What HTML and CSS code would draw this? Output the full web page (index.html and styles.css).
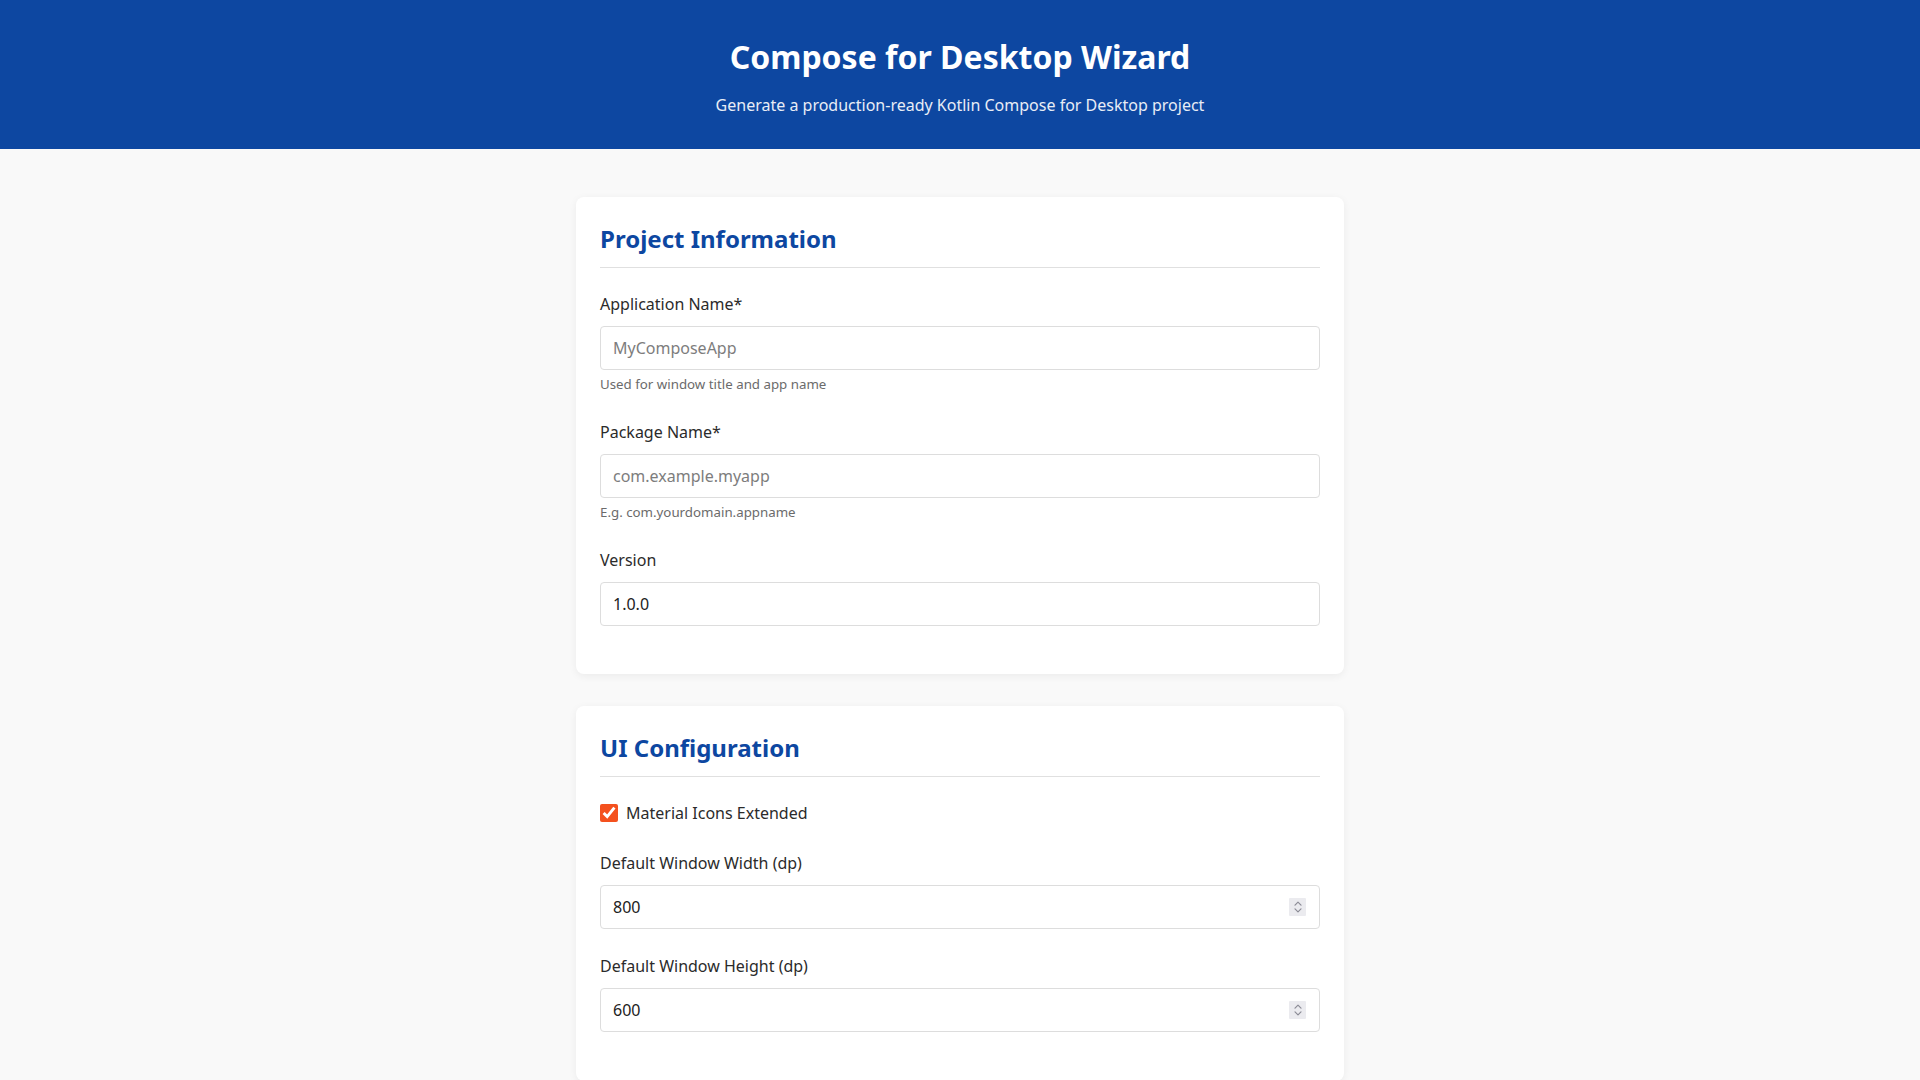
FILE: index.html
```html
<!DOCTYPE html>
<html lang="en">
<head>
<meta charset="utf-8">
<title>Compose for Desktop Wizard</title>
<link rel="stylesheet" href="styles.css">
</head>
<body>
<header class="app-header">
  <h1 class="app-title">Compose for Desktop Wizard</h1>
  <p class="app-subtitle">Generate a production-ready Kotlin Compose for Desktop project</p>
</header>
<main class="wizard">
  <section class="card card-first">
    <h2 class="card-title">Project Information</h2>
    <div class="form-group">
      <label class="field-label" for="appName">Application Name*</label>
      <input class="field-input" id="appName" type="text" placeholder="MyComposeApp">
      <div class="field-hint">Used for window title and app name</div>
    </div>
    <div class="form-group">
      <label class="field-label" for="pkgName">Package Name*</label>
      <input class="field-input" id="pkgName" type="text" placeholder="com.example.myapp">
      <div class="field-hint">E.g. com.yourdomain.appname</div>
    </div>
    <div class="form-group">
      <label class="field-label" for="version">Version</label>
      <input class="field-input" id="version" type="text" value="1.0.0">
    </div>
  </section>
  <section class="card">
    <h2 class="card-title">UI Configuration</h2>
    <div class="check-group">
      <label class="check-label"><input class="check-box" type="checkbox" checked> Material Icons Extended</label>
    </div>
    <div class="form-group">
      <label class="field-label" for="winW">Default Window Width (dp)</label>
      <div class="num-field">
        <input class="num-input" id="winW" type="number" value="800">
        <span class="spinner">
          <svg class="chev" viewBox="0 0 8 5" width="8" height="5"><path d="M1 4.2 L4 1.2 L7 4.2" /></svg>
          <svg class="chev" viewBox="0 0 8 5" width="8" height="5"><path d="M1 0.8 L4 3.8 L7 0.8" /></svg>
        </span>
      </div>
    </div>
    <div class="form-group">
      <label class="field-label" for="winH">Default Window Height (dp)</label>
      <div class="num-field">
        <input class="num-input" id="winH" type="number" value="600">
        <span class="spinner">
          <svg class="chev" viewBox="0 0 8 5" width="8" height="5"><path d="M1 4.2 L4 1.2 L7 4.2" /></svg>
          <svg class="chev" viewBox="0 0 8 5" width="8" height="5"><path d="M1 0.8 L4 3.8 L7 0.8" /></svg>
        </span>
      </div>
    </div>
  </section>
</main>
</body>
</html>
```
FILE: styles.css
```css
* { box-sizing: border-box; }
html, body { margin: 0; padding: 0; }
body {
  font-family: "Noto Sans", "Open Sans", sans-serif;
  background: #f9f9f9;
  color: #333;
  line-height: 1.5;
}
.app-header {
  background: #0d47a1;
  color: #fff;
  text-align: center;
  padding: 38px 0 32px;
}
.app-title {
  margin: 0 0 17px;
  font-size: 32px;
  font-weight: 700;
  line-height: 1.2;
}
.app-subtitle {
  margin: 0;
  font-size: 16px;
  line-height: 1.5;
  color: #e8edf6;
}
.wizard {
  width: 768px;
  margin: 0 auto;
  padding: 48px 0 48px;
  display: flex;
  flex-direction: column;
  gap: 32px;
}
.card {
  background: #fff;
  border-radius: 8px;
  box-shadow: 0 2px 8px rgba(0,0,0,0.06);
  padding: 24px 24px 24px;
}
.card-first {
  padding-bottom: 23px;
}
.card-title {
  margin: 0 0 24px;
  font-size: 24px;
  font-weight: 700;
  line-height: 1.5;
  color: #0d47a1;
  padding-bottom: 10px;
  border-bottom: 1px solid #e0e0e0;
}
.form-group {
  margin-bottom: 25px;
}
.field-label {
  display: block;
  font-size: 16px;
  line-height: 1.5;
  margin-bottom: 10px;
  color: #2b2b2b;
}
.field-input,
.num-field {
  display: block;
  width: 100%;
  font-family: inherit;
  font-size: 16px;
  color: #222;
  padding: 10px 12px;
  border: 1px solid #ddd;
  border-radius: 4px;
  background: #fff;
  line-height: normal;
}
.field-input::placeholder { color: #7d7d7d; }
.num-field {
  display: flex;
  align-items: center;
  padding-right: 13px;
}
.num-input {
  flex: 1;
  min-width: 0;
  border: 0;
  padding: 0;
  margin: 0;
  font: inherit;
  line-height: normal;
  color: inherit;
  background: transparent;
  outline: none;
  -moz-appearance: textfield;
}
.num-input::-webkit-inner-spin-button,
.num-input::-webkit-outer-spin-button {
  -webkit-appearance: none;
  margin: 0;
}
.spinner {
  width: 17px;
  height: 18px;
  background: #ebebef;
  border-radius: 1px;
  display: flex;
  flex-direction: column;
  align-items: center;
  justify-content: center;
  gap: 2px;
}
.chev {
  display: block;
  fill: none;
  stroke: #8c8c96;
  stroke-width: 1.2;
  stroke-linecap: round;
  stroke-linejoin: round;
}
.field-hint {
  margin-top: 5px;
  font-size: 13.3px;
  line-height: 1.5;
  color: #6b6b6b;
}
.check-group {
  margin-bottom: 26px;
}
.check-label {
  display: flex;
  align-items: center;
  gap: 8px;
  font-size: 16px;
  line-height: 1.5;
  color: #2b2b2b;
}
.check-box {
  width: 18px;
  height: 18px;
  margin: 0;
  accent-color: #f4511e;
}
```
